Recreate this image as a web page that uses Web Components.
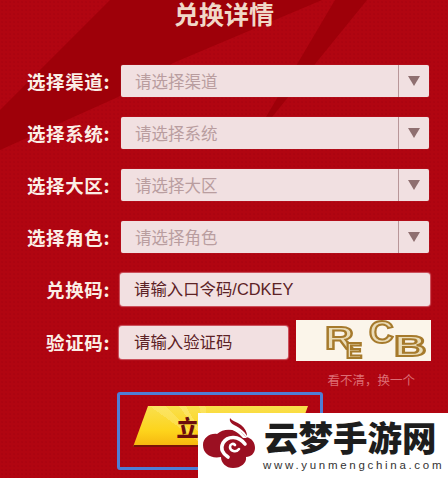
<!doctype html>
<html lang="zh">
<head>
<meta charset="utf-8">
<title>兑换详情</title>
<style>
  html, body { margin: 0; padding: 0; background: #b00510; }
  body { width: 448px; height: 478px; overflow: hidden; font-family: "Liberation Sans", "Noto Sans CJK SC", sans-serif; }
</style>
</head>
<body>
<redeem-page>
  <form-row label="选择渠道:"><select-box placeholder="请选择渠道"></select-box></form-row>
  <form-row label="选择系统:"><select-box placeholder="请选择系统"></select-box></form-row>
  <form-row label="选择大区:"><select-box placeholder="请选择大区"></select-box></form-row>
  <form-row label="选择角色:"><select-box placeholder="请选择角色"></select-box></form-row>
  <form-row label="兑换码:"><text-box text="请输入口令码/CDKEY" grow></text-box></form-row>
  <form-row label="验证码:">
    <text-box text="请输入验证码" style="width:169px"></text-box>
    <captcha-box></captcha-box>
  </form-row>
  <redeem-button slot="footer"></redeem-button>
</redeem-page>
<site-watermark></site-watermark>

<script>
const CJK = `"Noto Sans CJK SC", sans-serif`

class RedeemPage extends HTMLElement {
  constructor() {
    super()
    this.attachShadow({ mode: "open" }).innerHTML = `
      <style>
        :host { display: block; position: relative; width: 448px; height: 478px; overflow: hidden;
          background-color: #b10511;
          background-image: radial-gradient(#ac0410 0.7px, transparent 0.9px);
          background-size: 4px 4px; }
        svg { position: absolute; inset: 0; }
        h1 { position: relative; margin: 0; height: 65px; color: #f1d8c8; font: 700 25px/26px ${CJK}; text-align: center; }
        .form { position: relative; display: flex; flex-direction: column; gap: 20px; }
        .hint { position: relative; margin: 13px 33px 0 0; color: #dd6d74; font: 12.5px/16px ${CJK}; text-align: right; }
        .footer { position: relative; margin: 4px 0 0 117px; }
      </style>
      <svg width="448" height="478" viewBox="0 0 448 478">
        <polygon points="110,0 322,0 173,63 118,97 0,150 0,110" fill="#9e0009"/>
        <polygon points="335,0 367,0 272,117 266,117" fill="#9e0009"/>
      </svg>
      <h1>兑换详情</h1>
      <div class="form"><slot></slot></div>
      <div class="hint">看不清，换一个</div>
      <div class="footer"><slot name="footer"></slot></div>
    `
  }
}

class FormRow extends HTMLElement {
  constructor() {
    super()
    this.attachShadow({ mode: "open" }).innerHTML = `
      <style>
        :host { display: flex; align-items: flex-start; }
        label { flex: none; width: 110px; color: #fbeee6; font: 700 18.5px/32px ${CJK}; letter-spacing: 0.6px; text-align: right; white-space: nowrap; }
        .control { flex: 1; display: flex; gap: 8px; margin-left: 9px; margin-right: 18px; }
      </style>
      <label>${this.getAttribute("label")}</label>
      <div class="control"><slot></slot></div>
    `
  }
}

class SelectBox extends HTMLElement {
  constructor() {
    super()
    this.attachShadow({ mode: "open" }).innerHTML = `
      <style>
        :host { display: flex; flex: 1; height: 32px; margin: 0 1px 0 2px; background: #f1e0e1; border-radius: 2px; box-shadow: 0 0 1px #c8626a; }
        .value { flex: 1; padding-left: 14px; color: #b99d9f; font: 16.5px/32px ${CJK}; }
        .arrow { width: 30px; display: flex; align-items: center; justify-content: center; border-left: 1px solid #b89698; }
      </style>
      <div class="value">${this.getAttribute("placeholder")}</div>
      <div class="arrow">
        <svg width="12" height="12" viewBox="0 0 12 12"><polygon points="0,1 12,1 6,11" fill="#8f6f70"/></svg>
      </div>
    `
  }
}

class TextBox extends HTMLElement {
  constructor() {
    super()
    this.attachShadow({ mode: "open" }).innerHTML = `
      <style>
        :host { display: block; height: 33px; background: #f2e0e1; border-radius: 3px; box-shadow: 0 0 1px 1px #cf5a65; box-sizing: border-box; padding-left: 15px; color: #5c2226; font: 16.4px/33px "Liberation Sans", ${CJK}; white-space: nowrap; }
        :host([grow]) { flex: 1; margin-left: 1px; padding-left: 14px; }
      </style>
      ${this.getAttribute("text")}
    `
  }
}

class CaptchaBox extends HTMLElement {
  constructor() {
    super()
    this.attachShadow({ mode: "open" }).innerHTML = `
      <style>
        :host { display: block; flex: none; position: relative; width: 135px; height: 41px; margin: -6px -2px -8px 0; background: #fbf5ea; overflow: hidden; }
        span { position: absolute; transform-origin: 0 0; color: #eadcb8; -webkit-text-stroke: 2px #a67a2c; font-family: "Liberation Sans", sans-serif; font-weight: 700; line-height: 1; filter: blur(0.4px); }
      </style>
      <span style="left:29px;top:2px;font-size:32px;transform:scaleX(1.25)">R</span>
      <span style="left:50px;top:20px;font-size:22px;transform:scaleX(1.1)">E</span>
      <span style="left:73px;top:-3px;font-size:31px;transform:scaleX(1.1)">C</span>
      <span style="left:98px;top:12px;font-size:29px;transform:scaleX(1.55)">B</span>
    `
  }
}

class RedeemButton extends HTMLElement {
  constructor() {
    super()
    this.attachShadow({ mode: "open" }).innerHTML = `
      <style>
        :host { display: block; width: 206px; height: 78px; box-sizing: border-box; border: 3px solid #4f7dd3; border-radius: 3px; padding: 11px 0 0 13px; }
        .shape { width: 175px; height: 41px; display: flex; align-items: center; justify-content: center;
          clip-path: polygon(15px 0, 100% 0, 160px 100%, 0 100%);
          background:
            linear-gradient(transparent 94%, #7a1208 95%),
            conic-gradient(from 300deg at 45% 110%, transparent 0 6deg, #ffef8f55 6deg 14deg, transparent 14deg 24deg, #ffef8f66 24deg 30deg, transparent 30deg 44deg, #ffef8f55 44deg 52deg, transparent 52deg),
            linear-gradient(#f9e04e, #fdd41c 60%, #f6b40e);
          color: #6b0d0d; font: 900 22px/39px ${CJK}; }
      </style>
      <div class="shape">立即兑换</div>
    `
  }
}

class SiteWatermark extends HTMLElement {
  constructor() {
    super()
    this.attachShadow({ mode: "open" }).innerHTML = `
      <style>
        :host { position: absolute; left: 198px; top: 413px; width: 250px; height: 65px; background: #fff; }
        svg { position: absolute; left: 5px; top: 5px; }
        .name { position: absolute; left: 66px; top: 3px; color: #1d1d1d; font: 900 34.5px/40px ${CJK}; white-space: nowrap; }
        .url { position: absolute; left: 65px; top: 45px; color: #333; font: 11.5px/14px "Liberation Sans", sans-serif; letter-spacing: 2.7px; white-space: nowrap; }
      </style>
      <svg width="52" height="54" viewBox="0 0 52 54">
        <path fill="#9b1022" d="M14 16C18 12 24 11 30 12C36 12 40 15 43 19C49 20 52 25 52 30C52 35 48 39 43 39C44 45 38 50 30 50C23 50 18 45 18 39C8 41 0 36 0 27C0 20 7 15 14 16z"/>
        <path fill="none" stroke="#fff" stroke-width="3.6" stroke-linecap="round" d="M42 26C36 18 25 17 20 25C17 31 20 36 25 39"/>
        <path fill="none" stroke="#fff" stroke-width="2.6" stroke-linecap="round" d="M36 31C33 35 27 33 27 29C27 26 30 25 32 27"/>
        <path fill="#fff" d="M24 8C32 9 38 13 44 20L40 20C35 14 29 11 24 11z"/>
        <path fill="#9b1022" d="M27 0C29 3 34 4 38 7C42 10 44 14 44 18C41 13 37 10 33 8C29 6 26 4 27 0z"/>
      </svg>
      <div class="name">云梦手游网</div>
      <div class="url">www.yunmengchina.com</div>
    `
  }
}

customElements.define("redeem-page", RedeemPage)
customElements.define("form-row", FormRow)
customElements.define("select-box", SelectBox)
customElements.define("text-box", TextBox)
customElements.define("captcha-box", CaptchaBox)
customElements.define("redeem-button", RedeemButton)
customElements.define("site-watermark", SiteWatermark)
</script>
</body>
</html>
